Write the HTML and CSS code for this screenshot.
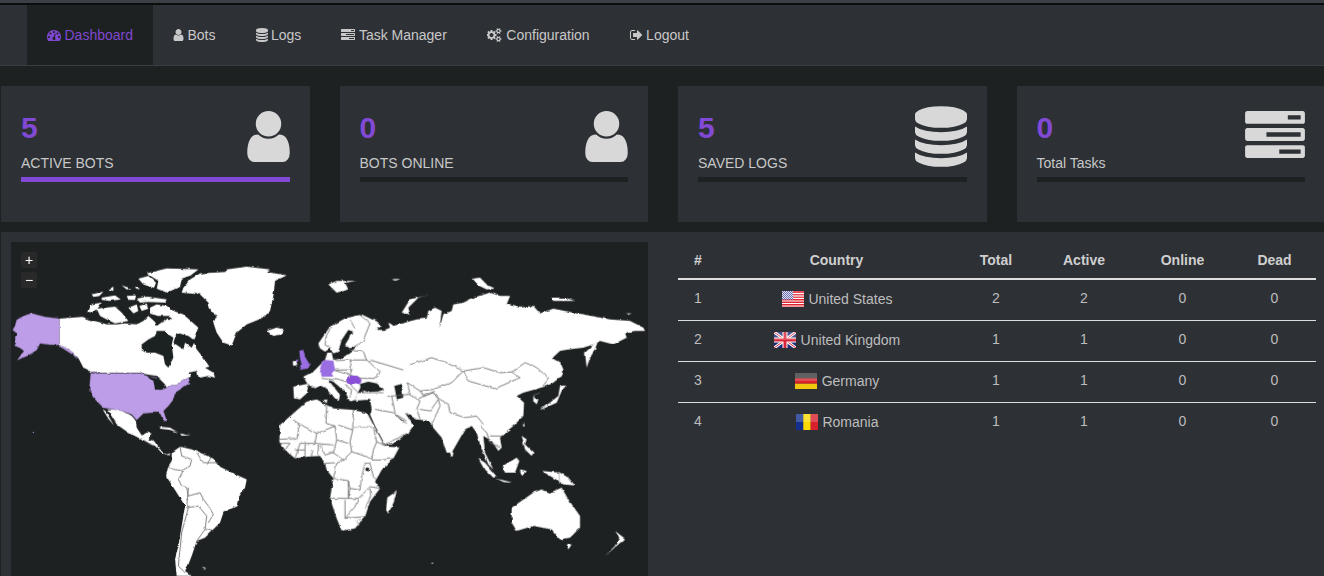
FILE: index.html
```html
<!DOCTYPE html>
<html>
  <head>
    <meta charset="utf-8">
    <title>Dashboard</title>
    <link rel="stylesheet" href="styles.css">
  </head>
  <body>
    <div class="topstrip"></div>
    <nav class="navbar">
      <a class="nav-item active" href="#"><svg class="ni ni-dash" viewBox="64 0 1664 1792"><path d="M384 1152q0-53-37.5-90.5t-90.5-37.5-90.5 37.5-37.5 90.5 37.5 90.5 90.5 37.5 90.5-37.5 37.5-90.5zm192-448q0-53-37.5-90.5t-90.5-37.5-90.5 37.5-37.5 90.5 37.5 90.5 90.5 37.5 90.5-37.5 37.5-90.5zm428 481l101-382q6-26-7.5-48.5t-38.5-29.5-48 6.5-30 39.5l-101 382q-60 5-107 43.5t-63 98.5q-20 77 20 146t117 89 146-20 89-117q16-60-6-117t-72-91zm660-33q0-53-37.5-90.5t-90.5-37.5-90.5 37.5-37.5 90.5 37.5 90.5 90.5 37.5 90.5-37.5 37.5-90.5zm-640-640q0-53-37.5-90.5t-90.5-37.5-90.5 37.5-37.5 90.5 37.5 90.5 90.5 37.5 90.5-37.5 37.5-90.5zm448 192q0-53-37.5-90.5t-90.5-37.5-90.5 37.5-37.5 90.5 37.5 90.5 90.5 37.5 90.5-37.5 37.5-90.5zm320 448q0 261-141 483-19 29-54 29h-1402q-35 0-54-29-141-221-141-483 0-182 71-348t191-286 286-191 348-71 348 71 286 191 191 286 71 348z"/></svg> Dashboard</a>
      <a class="nav-item" href="#"><svg class="ni ni-user" viewBox="192 0 1408 1792"><path d="M1536 1399q0 109-62.5 187t-150.5 78h-854q-88 0-150.5-78t-62.5-187q0-85 8.5-160.5t31.5-152 58.5-131 94-89 134.5-34.5q131 128 313 128t313-128q76 0 134.5 34.5t94 89 58.5 131 31.5 152 8.5 160.5zm-256-887q0 159-112.5 271.5t-271.5 112.5-271.5-112.5-112.5-271.5 112.5-271.5 271.5-112.5 271.5 112.5 112.5 271.5z"/></svg> Bots</a>
      <a class="nav-item" href="#"><svg class="ni ni-db" viewBox="128 0 1536 1792"><path d="M896 768q237 0 443-43t325-127v170q0 69-103 128t-280 93.5-385 34.5-385-34.5-280-93.5-103-128v-170q119 84 325 127t443 43zm0 768q237 0 443-43t325-127v170q0 69-103 128t-280 93.5-385 34.5-385-34.5-280-93.5-103-128v-170q119 84 325 127t443 43zm0-384q237 0 443-43t325-127v170q0 69-103 128t-280 93.5-385 34.5-385-34.5-280-93.5-103-128v-170q119 84 325 127t443 43zm0-1152q208 0 385 34.5t280 93.5 103 128v128q0 69-103 128t-280 93.5-385 34.5-385-34.5-280-93.5-103-128v-128q0-69 103-128t280-93.5 385-34.5z"/></svg> Logs</a>
      <a class="nav-item" href="#"><svg class="ni ni-tasks" viewBox="0 0 1792 1792"><path fill-rule="evenodd" d="M1024 1408h640v-128h-640v128zm-384-512h1024v-128h-1024v128zm640-512h384v-128h-384v128zm512 832v256q0 26-19 45t-45 19h-1664q-26 0-45-19t-19-45v-256q0-26 19-45t45-19h1664q26 0 45 19t19 45zm0-512v256q0 26-19 45t-45 19h-1664q-26 0-45-19t-19-45v-256q0-26 19-45t45-19h1664q26 0 45 19t19 45zm0-512v256q0 26-19 45t-45 19h-1664q-26 0-45-19t-19-45v-256q0-26 19-45t45-19h1664q26 0 45 19t19 45z"/></svg> Task Manager</a>
      <a class="nav-item" href="#"><svg class="ni ni-gears" viewBox="64 0 1920 1792"><path fill-rule="evenodd" d="M832 896q0-106-75-181t-181-75-181 75-75 181 75 181 181 75 181-75 75-181zm768 512q0-52-38-90t-90-38-90 38-38 90q0 53 37.5 90.5t90.5 37.5 90.5-37.5 37.5-90.5zm0-1024q0-52-38-90t-90-38-90 38-38 90q0 53 37.5 90.5t90.5 37.5 90.5-37.5 37.5-90.5zm-384 421v185q0 10-7 19.5t-16 10.5l-155 24q-11 35-32 76 34 48 90 115 7 11 7 20 0 12-7 19-23 30-82.5 89.5t-78.5 59.5q-11 0-21-7l-115-90q-37 19-77 31-11 108-23 155-7 24-30 24h-186q-11 0-20-7.5t-10-17.5l-23-153q-34-10-75-31l-118 89q-7 7-20 7-11 0-21-8-144-133-144-160 0-9 7-19 10-14 41-53t47-61q-23-44-35-82l-152-24q-10-1-17-9.5t-7-19.5v-185q0-10 7-19.5t16-10.5l155-24q11-35 32-76-34-48-90-115-7-11-7-20 0-12 7-20 22-30 82-89t79-59q11 0 21 7l115 90q34-18 77-32 11-108 23-154 7-24 30-24h186q11 0 20 7.5t10 17.5l23 153q34 10 75 31l118-89q8-7 20-7 11 0 21 8 144 133 144 160 0 8-7 19-12 16-42 54t-45 60q23 48 34 82l152 23q10 2 17 10.5t7 19.5zm640 533v140q0 16-149 31-12 27-30 52 51 113 51 138 0 4-4 7-122 71-124 71-8 0-46-47t-52-68q-20 2-30 2t-30-2q-14 21-52 68t-46 47q-2 0-124-71-4-3-4-7 0-25 51-138-18-25-30-52-149-15-149-31v-140q0-16 149-31 13-29 30-52-51-113-51-138 0-4 4-7 4-2 35-20t59-34 30-16q8 0 46 46.5t52 67.5q20-2 30-2t30 2q51-71 92-112l6-2q4 0 124 70 4 3 4 7 0 25-51 138 17 23 30 52 149 15 149 31zm0-1024v140q0 16-149 31-12 27-30 52 51 113 51 138 0 4-4 7-122 71-124 71-8 0-46-47t-52-68q-20 2-30 2t-30-2q-14 21-52 68t-46 47q-2 0-124-71-4-3-4-7 0-25 51-138-18-25-30-52-149-15-149-31v-140q0-16 149-31 13-29 30-52-51-113-51-138 0-4 4-7 4-2 35-20t59-34 30-16q8 0 46 46.5t52 67.5q20-2 30-2t30 2q51-71 92-112l6-2q4 0 124 70 4 3 4 7 0 25-51 138 17 23 30 52 149 15 149 31z"/></svg> Configuration</a>
      <a class="nav-item" href="#"><svg class="ni ni-out" viewBox="64 0 1664 1792"><path d="M704 1440q0 4 1 20t.5 26.5-3 23.5-10 19.5-20.5 6.5h-320q-119 0-203.5-84.5t-84.5-203.5v-704q0-119 84.5-203.5t203.5-84.5h320q13 0 22.5 9.5t9.5 22.5q0 4 1 20t.5 26.5-3 23.5-10 19.5-20.5 6.5h-320q-66 0-113 47t-47 113v704q0 66 47 113t113 47h312l11.5 1 11.5 3 8 5.5 7 9 2 13.5zm928-544q0 26-19 45l-544 544q-19 19-45 19t-45-19-19-45v-288h-448q-26 0-45-19t-19-45v-384q0-26 19-45t45-19h448v-288q0-26 19-45t45-19 45 19l544 544q19 19 19 45z"/></svg> Logout</a>
    </nav>

    <section class="stats">
      <div class="stat">
        <div class="stat-head">
          <div>
            <div class="stat-num">5</div>
            <div class="stat-label">ACTIVE BOTS</div>
          </div>
          <svg class="big-user" viewBox="256 128 1280 1536"><path d="M1536 1399q0 109-62.5 187t-150.5 78h-854q-88 0-150.5-78t-62.5-187q0-85 8.5-160.5t31.5-152 58.5-131 94-89 134.5-34.5q131 128 313 128t313-128q76 0 134.5 34.5t94 89 58.5 131 31.5 152 8.5 160.5zm-256-887q0 159-112.5 271.5t-271.5 112.5-271.5-112.5-112.5-271.5 112.5-271.5 271.5-112.5 271.5 112.5 112.5 271.5z"/></svg>
        </div>
        <div class="stat-bar filled"></div>
      </div>
      <div class="stat">
        <div class="stat-head">
          <div>
            <div class="stat-num">0</div>
            <div class="stat-label">BOTS ONLINE</div>
          </div>
          <svg class="big-user" viewBox="256 128 1280 1536"><path d="M1536 1399q0 109-62.5 187t-150.5 78h-854q-88 0-150.5-78t-62.5-187q0-85 8.5-160.5t31.5-152 58.5-131 94-89 134.5-34.5q131 128 313 128t313-128q76 0 134.5 34.5t94 89 58.5 131 31.5 152 8.5 160.5zm-256-887q0 159-112.5 271.5t-271.5 112.5-271.5-112.5-112.5-271.5 112.5-271.5 271.5-112.5 271.5 112.5 112.5 271.5z"/></svg>
        </div>
        <div class="stat-bar"></div>
      </div>
      <div class="stat">
        <div class="stat-head">
          <div>
            <div class="stat-num">5</div>
            <div class="stat-label">SAVED LOGS</div>
          </div>
          <svg class="big-db" viewBox="128 0 1536 1792"><path d="M896 768q237 0 443-43t325-127v170q0 69-103 128t-280 93.5-385 34.5-385-34.5-280-93.5-103-128v-170q119 84 325 127t443 43zm0 768q237 0 443-43t325-127v170q0 69-103 128t-280 93.5-385 34.5-385-34.5-280-93.5-103-128v-170q119 84 325 127t443 43zm0-384q237 0 443-43t325-127v170q0 69-103 128t-280 93.5-385 34.5-385-34.5-280-93.5-103-128v-170q119 84 325 127t443 43zm0-1152q208 0 385 34.5t280 93.5 103 128v128q0 69-103 128t-280 93.5-385 34.5-385-34.5-280-93.5-103-128v-128q0-69 103-128t280-93.5 385-34.5z"/></svg>
        </div>
        <div class="stat-bar"></div>
      </div>
      <div class="stat">
        <div class="stat-head">
          <div>
            <div class="stat-num">0</div>
            <div class="stat-label">Total Tasks</div>
          </div>
          <svg class="big-tasks" viewBox="0 128 1792 1408"><path fill-rule="evenodd" d="M1024 1408h640v-128h-640v128zm-384-512h1024v-128h-1024v128zm640-512h384v-128h-384v128zm512 832v256q0 26-19 45t-45 19h-1664q-26 0-45-19t-19-45v-256q0-26 19-45t45-19h1664q26 0 45 19t19 45zm0-512v256q0 26-19 45t-45 19h-1664q-26 0-45-19t-19-45v-256q0-26 19-45t45-19h1664q26 0 45 19t19 45zm0-512v256q0 26-19 45t-45 19h-1664q-26 0-45-19t-19-45v-256q0-26 19-45t45-19h1664q26 0 45 19t19 45z"/></svg>
        </div>
        <div class="stat-bar"></div>
      </div>
    </section>

    <section class="panel">
      <div class="map-box">
        <div class="zoom-btn zoom-in">+</div>
        <div class="zoom-btn zoom-out">−</div>
        <!-- coordinates are 3x page px, x from 0, y from 236 -->
        <svg class="map" viewBox="33 18 1911 1002">
          <defs>
            <pattern id="dots" width="2" height="2" patternUnits="userSpaceOnUse"><rect width="1" height="1" fill="#d8d8f0"/><rect x="1" y="1" width="1" height="1" fill="#d8d8f0"/></pattern>
            <filter id="rough" filterUnits="userSpaceOnUse" x="0" y="0" width="2000" height="1100">
              <feTurbulence type="fractalNoise" baseFrequency="0.05" numOctaves="3" seed="4"/>
              <feDisplacementMap in="SourceGraphic" scale="8" xChannelSelector="R" yChannelSelector="G"/>
            </filter>
          </defs>
          <g class="world">
          <g class="land">
            <polygon points="178,248 245,243 270,252 295,258 320,265 350,265 375,262 410,265 430,255 445,240 465,258 470,270 500,248 530,250 560,262 585,285 578,310 590,340 610,365 628,392 615,395 640,410 645,425 625,420 600,425 580,418 565,425 540,440 510,450 490,460 486,440 470,420 440,415 420,410 270,410 262,400 250,395 236,368 222,352 205,340 178,327"/>
            <polygon points="440,112 500,97 595,100 572,118 545,128 540,152 500,170 470,158 475,135"/>
            <polygon points="415,128 445,120 468,140 462,155 430,145"/>
            <polygon points="450,215 470,205 500,210 520,225 550,235 595,275 580,310 565,305 575,290 530,270 510,240 470,240 450,232"/>
            <polygon points="262,228 270,205 305,200 290,222 270,232"/>
            <polygon points="290,218 345,212 365,230 385,255 345,262 320,250 300,240"/>
            <polygon points="385,215 410,205 415,225 400,232"/>
            <polygon points="418,210 440,203 445,218 425,225"/>
            <polygon points="275,175 310,167 298,180 280,183"/>
            <polygon points="305,185 345,178 362,190 330,195 305,192"/>
            <polygon points="380,180 408,178 405,192 385,192"/>
            <polygon points="410,188 440,182 500,190 495,200 445,198 420,200"/>
            <polygon points="365,148 395,158 380,160"/>
            <polygon points="325,160 340,152 340,165"/>
            <polygon points="405,152 420,158 410,162"/>
            <polygon points="680,100 740,92 810,100 800,108 860,118 825,135 820,180 810,225 790,245 740,265 710,290 695,328 670,320 650,290 640,260 650,240 635,230 625,200 600,175 545,170 550,155 570,130 600,112 680,108"/>
            <polygon points="800,285 830,275 852,280 845,295 820,300"/>
            <polygon points="322,520 340,520 370,525 395,540 408,555 410,575 425,598 440,590 458,592 445,610 462,615 478,638 500,655 515,650 505,658 485,650 465,630 425,610 385,590 350,565"/>
            <polygon points="308,520 316,525 342,568 325,548"/>
            <polygon points="478,572 510,575 535,590 510,582 480,578"/>
            <polygon points="540,592 560,597 575,598 545,599"/>
            <polygon points="515,650 540,632 575,640 600,650 640,668 655,690 700,712 740,730 735,755 715,785 710,810 670,830 660,860 635,885 615,905 590,915 575,960 565,985 555,1005 575,1020 530,1020 525,970 535,930 555,810 530,770 498,720 505,690 515,675"/>
            <polygon points="605,997 618,996 615,1000"/>
          </g>
          <g class="dark">
            <polygon points="425,325 445,310 465,300 470,285 495,285 505,295 520,305 515,325 520,365 505,395 495,385 490,360 465,350 440,350 425,340"/>
            <polygon points="530,290 565,300 585,315 575,335 555,320 550,340 520,320"/>
            <polygon points="565,410 590,405 596,425 580,432"/>
          </g>
          <g class="lines">
            <polyline points="540,632 545,660 575,670 570,690 552,700 535,730 545,750 560,755 565,780 600,770 610,790 625,810 640,835 625,860"/>
            <polyline points="505,690 520,700 552,705"/>
            <polyline points="565,755 560,815 595,810 620,840 615,880"/>
            <polyline points="565,815 545,890 535,990 555,1010"/>
            <polyline points="590,650 610,680 655,680"/>
            <polyline points="632,665 622,685"/>
            <polyline points="590,915 615,880 640,885"/>
            <polyline points="430,612 450,625"/>
          </g>
          <g class="visited-light">
            <polygon points="178,248 135,243 95,232 70,240 50,252 45,270 38,282 50,292 45,305 48,322 42,328 60,336 72,345 52,372 85,358 110,342 120,322 150,326 178,327 205,340 222,352 236,368 222,358 205,348 190,338 178,330"/>
            <polygon points="272,412 420,412 440,420 470,425 465,455 490,460 510,450 540,440 565,425 570,440 548,455 525,470 520,490 505,510 490,525 500,555 490,555 480,530 455,530 430,532 410,552 395,535 370,525 340,520 310,515 280,485 268,460"/>
          </g>
          <g class="dark">
            <polygon points="440,418 480,430 495,445 500,455 482,462 465,460 460,435"/>
          </g>

          <!-- africa -->
          <g transform="translate(810,522)">
            <polygon class="fill-land" points="30,45 70,10 110,-25 140,-32 170,-15 190,-5 250,0 292,10 310,45 340,100 350,110 388,112 370,145 335,180 315,215 330,235 300,275 285,320 255,355 215,362 200,325 180,265 190,205 170,180 165,160 150,138 110,140 75,145 45,120 28,95"/>
            <polygon class="fill-land" points="380,240 372,275 355,310 348,300 352,262 370,250"/>
            <g class="lines">
              <polyline points="68,28 85,40 85,85 28,88"/>
              <polyline points="85,40 140,70 195,48 200,90 190,128 165,135"/>
              <polyline points="170,-15 168,40 195,48"/>
              <polyline points="250,0 248,60 205,45"/>
              <polyline points="248,60 240,95 245,125 290,140 305,150"/>
              <polyline points="140,70 135,100 90,100 75,145"/>
              <polyline points="135,100 190,105"/>
              <polyline points="200,90 235,100"/>
              <polyline points="310,52 320,95 310,120 305,150 340,150 370,145"/>
              <polyline points="320,95 350,110"/>
              <polyline points="245,125 220,150 200,160 190,205 235,212 240,235 270,240 275,200 285,160 300,160"/>
              <polyline points="165,160 195,158"/>
              <polyline points="235,212 235,265 180,265"/>
              <polyline points="240,235 235,265 265,265 300,230 330,235"/>
              <polyline points="225,270 225,325"/>
              <polyline points="300,160 310,200 320,210"/>
              <polyline points="300,235 302,260 285,295"/>
              <polyline points="265,265 255,290 225,325 285,320"/>
              <polyline points="105,120 105,140"/>
              <polyline points="125,120 125,140"/>
              <polyline points="28,100 60,100 45,120"/>
              <polyline points="75,120 105,120 105,100"/>
              <polyline points="150,105 165,135"/>
              <polyline points="190,128 220,150"/>
              <polyline points="145,135 145,105"/>
              <circle class="ring" cx="266" cy="335" r="5"/>
            </g>
            <polyline class="line-pale" points="250,52 310,52"/>
            <polyline class="line-pale" points="50,88 85,88"/>
            <circle class="fill-dark" cx="292" cy="178" r="6"/>
          </g>

          <!-- asia, coordinates from x 960 -->
          <g transform="translate(960,0)">
            <polygon class="fill-land" points="125,235 165,255 185,270 170,280 150,275 165,295 210,275 205,260 215,265 220,270 290,250 320,248 325,225 345,215 365,225 358,275 370,235 395,225 400,205 430,200 460,185 510,170 540,180 570,180 560,205 600,215 640,210 660,232 700,218 760,230 815,240 870,250 930,255 970,275 975,285 945,285 915,290 920,305 880,325 840,315 820,325 790,335 745,340 720,345 695,368 720,378 730,400 725,420 700,440 680,450 645,460 610,470 590,480 612,500 610,540 580,570 555,590 540,605 545,635 535,645 515,615 490,600 495,650 520,700 505,685 480,625 470,590 455,570 435,580 395,650 380,650 365,605 335,570 330,555 290,550 255,530 280,570 265,590 215,625 195,625 165,570 150,535 155,522 150,490 180,470 130,470"/>
            <polygon class="fill-land" points="25,145 50,135 110,135 75,140 85,160 50,170"/>
            <polygon class="fill-land" points="215,130 238,128 225,134"/>
            <polygon class="fill-land" points="245,230 270,190 330,175 295,185 265,215 270,235"/>
            <polygon class="fill-land" points="458,128 480,125 500,145 525,158 500,160 475,148"/>
            <polygon class="fill-land" points="695,185 735,185 765,195 735,195 700,195"/>
            <polygon class="fill-land" points="920,232 935,232 925,236"/>
            <polygon class="fill-land" points="795,350 835,312 825,340 810,365 800,395"/>
            <polygon class="fill-land" points="660,520 690,500 715,480 720,450 738,448 725,465 710,500 665,520"/>
            <polygon class="fill-land" points="720,380 730,410 722,425 720,400"/>
            <polygon class="fill-land" points="640,480 655,490 650,505 640,495"/>
            <polygon class="fill-land" points="612,560 614,572 608,570"/>
            <polygon class="fill-land" points="393,645 400,650 398,662 392,660"/>
            <polygon class="fill-land" points="475,668 495,680 530,722 520,725 490,695"/>
            <polygon class="fill-land" points="530,728 580,740 550,738"/>
            <polygon class="fill-land" points="548,690 590,665 598,675 585,710 555,710"/>
            <polygon class="fill-land" points="600,700 620,705 610,720 603,715"/>
            <polygon class="fill-land" points="605,600 620,610 615,625 640,650 635,660 615,640"/>
            <polygon class="fill-land" points="665,705 720,710 745,725 765,748 730,745 715,735 690,720"/>
            <polygon class="fill-land" points="575,815 640,770 665,760 690,770 725,755 745,790 780,840 780,875 750,905 720,910 695,880 640,870 590,885 575,860"/>
            <polygon class="fill-land" points="740,925 755,925 745,940"/>
            <polygon class="fill-land" points="885,885 915,908 895,925 855,960 885,930 898,905"/>
            <polygon class="fill-land" points="333,980 340,980 338,984"/>
            <polygon class="fill-dark" points="218,430 250,425 245,445 250,485 230,490 225,460"/>
            <polygon class="fill-dark" points="220,530 250,555 265,565 245,555"/>
            <g class="lines">
              <polyline points="125,375 215,410 240,395 290,380 335,365 375,378 430,405 490,395 540,410 575,408 615,380 650,395 685,425 670,450"/>
              <polyline points="430,405 445,435 525,458 600,425 575,408"/>
              <polyline points="215,410 225,430 262,440 300,465 340,460 395,440 430,405"/>
              <polyline points="340,470 360,490 385,505 390,530 435,545 470,540 490,565"/>
              <polyline points="215,480 270,475 300,495 290,520 300,550"/>
              <polyline points="290,490 340,470 355,490 330,525 300,520"/>
              <polyline points="355,490 360,510 335,565"/>
              <polyline points="480,570 500,590 510,620 540,635"/>
              <polyline points="150,490 215,480 225,530"/>
              <polyline points="165,520 220,530 260,555"/>
              <polyline points="195,625 265,590"/>
              <polyline points="262,440 270,475"/>
              <polyline points="640,478 660,470"/>
              <polyline points="300,465 310,480 345,465"/>
              <polyline points="510,600 545,600"/>
            </g>
            <polyline class="line-pale" points="718,708 718,742"/>
          </g>

          <!-- europe -->
          <g transform="translate(810,222)">
            <polygon class="fill-land" points="100,200 130,185 150,165 165,150 172,128 185,128 190,150 215,145 240,128 280,125 300,150 420,150 420,215 345,235 330,215 300,210 285,225 270,235 262,250 255,270 240,275 225,245 190,215 175,210 210,255 207,270 195,265 175,240 155,225 135,235 115,225 110,250 90,268 72,265 70,230 112,222"/>
            <polygon class="fill-land" points="145,100 180,50 225,25 270,15 300,40 320,60 400,60 400,150 240,128 265,105 240,115 225,105 240,80 250,65 235,60 215,90 205,125 190,130 180,115 165,125 150,115"/>
            <polygon class="fill-land" points="255,272 262,248 340,248 355,262 340,265 310,270 285,270"/>
            <polygon class="fill-land" points="68,155 78,150 82,165 70,168"/>
            <polygon class="fill-land" points="160,270 172,268 170,280"/>
            <polygon class="fill-dark" points="270,222 295,215 320,220 342,238 325,244 295,246 272,240"/>
            <g class="lines">
              <polyline points="185,50 170,75 165,105 185,115"/>
              <polyline points="240,30 255,55"/>
              <polyline points="270,15 300,40 280,90 265,105"/>
              <polyline points="235,120 280,125 290,150 240,150 195,152"/>
              <polyline points="240,150 245,180 195,180"/>
              <polyline points="290,150 330,185 320,205 275,205 240,195 245,180"/>
              <polyline points="112,222 135,235"/>
              <polyline points="155,205 200,210"/>
              <polyline points="195,205 230,215 262,245"/>
              <polyline points="300,150 400,180"/>
              <polyline points="262,248 340,248"/>
              <polyline points="190,180 240,195"/>
              <polyline points="225,225 245,240 240,262"/>
            </g>
            <polygon class="uk" points="88,122 100,120 105,140 120,165 115,175 90,180 95,165 90,145"/>
            <polygon class="uk" points="76,150 84,148 84,155 78,156"/>
            <polygon class="uk" points="165,150 190,152 195,180 185,190 190,200 155,200 150,175 155,160"/>
            <polygon class="ro" points="228,208 240,197 262,197 275,210 270,222 245,225 232,220"/>
          </g>
          </g>
          <circle class="hawaii" cx="100" cy="589" r="2"/>
        </svg>
      </div>

      <table class="geo">
        <thead>
          <tr><th>#</th><th>Country</th><th>Total</th><th>Active</th><th>Online</th><th>Dead</th></tr>
        </thead>
        <tbody>
          <tr>
            <td>1</td>
            <td class="country"><svg class="flag" viewBox="0 0 22 16"><rect width="22" height="16" fill="#e0242f"/><path d="M0 2.5h22M0 5h22M0 7.5h22M0 10h22M0 12.500h22M0 15h22" stroke="#fff" stroke-width="1.200"/><rect width="11" height="8.500" fill="#4a4fa0"/><rect width="11" height="8.500" fill="url(#dots)"/><rect class="gloss" width="22" height="8"/></svg> United States</td>
            <td>2</td><td>2</td><td>0</td><td>0</td>
          </tr>
          <tr>
            <td>2</td>
            <td class="country"><svg class="flag" viewBox="0 0 22 16"><rect width="22" height="16" fill="#1e2a78"/><path d="M0 0L22 16M22 0L0 16" stroke="#fff" stroke-width="3"/><path d="M0 0L22 16M22 0L0 16" stroke="#d82436" stroke-width="1"/><path d="M11 0v16M0 8h22" stroke="#fff" stroke-width="5"/><path d="M11 0v16M0 8h22" stroke="#d82436" stroke-width="3"/><rect class="gloss" width="22" height="8"/></svg> United Kingdom</td>
            <td>1</td><td>1</td><td>0</td><td>0</td>
          </tr>
          <tr>
            <td>3</td>
            <td class="country"><svg class="flag" viewBox="0 0 22 16"><rect width="22" height="5.300" fill="#3a3a3a"/><rect y="5.300" width="22" height="5.400" fill="#d8222a"/><rect y="10.700" width="22" height="5.300" fill="#f2c80f"/><rect class="gloss" width="22" height="8"/></svg> Germany</td>
            <td>1</td><td>1</td><td>0</td><td>0</td>
          </tr>
          <tr>
            <td>4</td>
            <td class="country"><svg class="flag" viewBox="0 0 22 16"><rect width="7.300" height="16" fill="#13308c"/><rect x="7.300" width="7.400" height="16" fill="#fcd900"/><rect x="14.700" width="7.300" height="16" fill="#d8202c"/><rect class="gloss" width="22" height="8"/></svg> Romania</td>
            <td>1</td><td>1</td><td>0</td><td>0</td>
          </tr>
        </tbody>
      </table>
    </section>
  </body>
</html>
```

FILE: styles.css
```css
html, body {
    margin: 0;
    height: 576px;
    overflow: hidden;
}
body {
    background: #1e2122;
    color: #c8c8c8;
    font-family: "Liberation Sans", Arial, sans-serif;
    font-size: 14px;
    line-height: 20px;
}
.topstrip {
    height: 3px;
    background: #3c3f46;
    border-bottom: 2px solid #0b0c0d;
}
.navbar {
    display: flex;
    height: 60px;
    padding-left: 27px;
    background: #2d3035;
    border-bottom: 1px solid #3a3d42;
}
.nav-item {
    display: flex;
    align-items: center;
    gap: 3.5px;
    padding: 0 20px;
    color: #c8c8c8;
    text-decoration: none;
}
.nav-item.active {
    background: #1e2122;
    color: #7f48d0;
}
.ni {
    height: 14px;
    fill: currentColor;
    flex: none;
}
.ni-dash { width: 14px; }
.ni-out { width: 13px; }
.ni-user { width: 11px; }
.ni-db { width: 12px; }
.ni-tasks { width: 14px; }
.ni-gears { width: 16px; }

.stats {
    display: grid;
    grid-template-columns: repeat(3, 308.5px) 1fr;
    gap: 30px;
    margin: 20px 0 10px 1px;
}
.stat {
    height: 136px;
    box-sizing: border-box;
    padding: 20px;
    background: #2d3035;
}
.stat:last-child {
    padding-right: 19px;
}
.stat-head {
    display: flex;
    justify-content: space-between;
    align-items: flex-start;
    height: 71px;
}
.stat-num {
    color: #8249d6;
    font-size: 30px;
    font-weight: bold;
    line-height: 33px;
    margin: 5px 0 9px;
}
.stat-label {
    line-height: 20px;
}
.stat-bar {
    height: 5px;
    background: #1e2122;
}
.stat-bar.filled {
    background: #8249d6;
}
.big-user, .big-db, .big-tasks {
    fill: #d8d8d8;
}
.big-user {
    width: 43px;
    height: 51px;
    margin-top: 5px;
}
.big-db {
    width: 52px;
    height: 61px;
}
.big-tasks {
    width: 60px;
    height: 47px;
    margin-top: 5px;
}

.panel {
    display: flex;
    align-items: flex-start;
    gap: 30px;
    margin-left: 1px;
    padding: 10px 9px 10px 10px;
    background: #2d3035;
}
.map-box {
    position: relative;
    flex: none;
    width: 637px;
    background: #1e2122;
}
.map {
    display: block;
    width: 637px;
    height: 334px;
}
.world {
    filter: url(#rough);
}
.land polygon, .fill-land {
    fill: #fff;
}
.dark polygon, .fill-dark {
    fill: #1e2122;
}
.lines polyline {
    fill: none;
    stroke: #666;
    stroke-width: 2.5;
}
.ring {
    fill: none;
    stroke: #666;
    stroke-width: 1.500;
}
.line-pale {
    fill: none;
    stroke: #bbb;
    stroke-width: 3;
}
.visited-light {
    fill: #bd9de8;
    stroke: #8f7bb0;
    stroke-width: 1;
}
.hawaii {
    fill: #bd9de8;
}
.uk {
    fill: #9a6ee2;
}
.ro {
    fill: #8a4fd8;
}
.zoom-btn {
    position: absolute;
    left: 10px;
    width: 16px;
    height: 16px;
    border-radius: 3px;
    background: #292929;
    color: #fff;
    font-size: 14px;
    line-height: 16px;
    text-align: center;
}
.zoom-in { top: 10px; }
.zoom-out { top: 30px; }

.geo {
    flex: none;
    width: 637px;
    table-layout: fixed;
    border-collapse: collapse;
}
.geo th, .geo td {
    padding: 0;
    text-align: center;
}
.geo th {
    height: 36px;
    color: #cfcfcf;
    border-bottom: 2px solid #dedede;
}
.geo td {
    height: 41px;
    padding-bottom: 4px;
    box-sizing: border-box;
    color: #bdbdbd;
    border-bottom: 1px solid #dedede;
}
.geo tr:last-child td {
    border-bottom: none;
}
.geo th:nth-child(1) { width: 40px; }
.geo th:nth-child(2) { width: 237px; }
.geo th:nth-child(3) { width: 82px; }
.geo th:nth-child(4) { width: 94px; }
.geo th:nth-child(5) { width: 101px; }
.geo th:nth-child(6) { width: 83px; }
.geo th:nth-child(5), .geo td:nth-child(5) {
    padding-left: 1px;
}
.geo td.country {
    padding-top: 2px;
    padding-left: 1px;
}
.flag {
    width: 22px;
    height: 16px;
    margin-right: 1px;
    vertical-align: -3px;
}
.gloss {
    fill: #fff;
    opacity: .2;
}
```
